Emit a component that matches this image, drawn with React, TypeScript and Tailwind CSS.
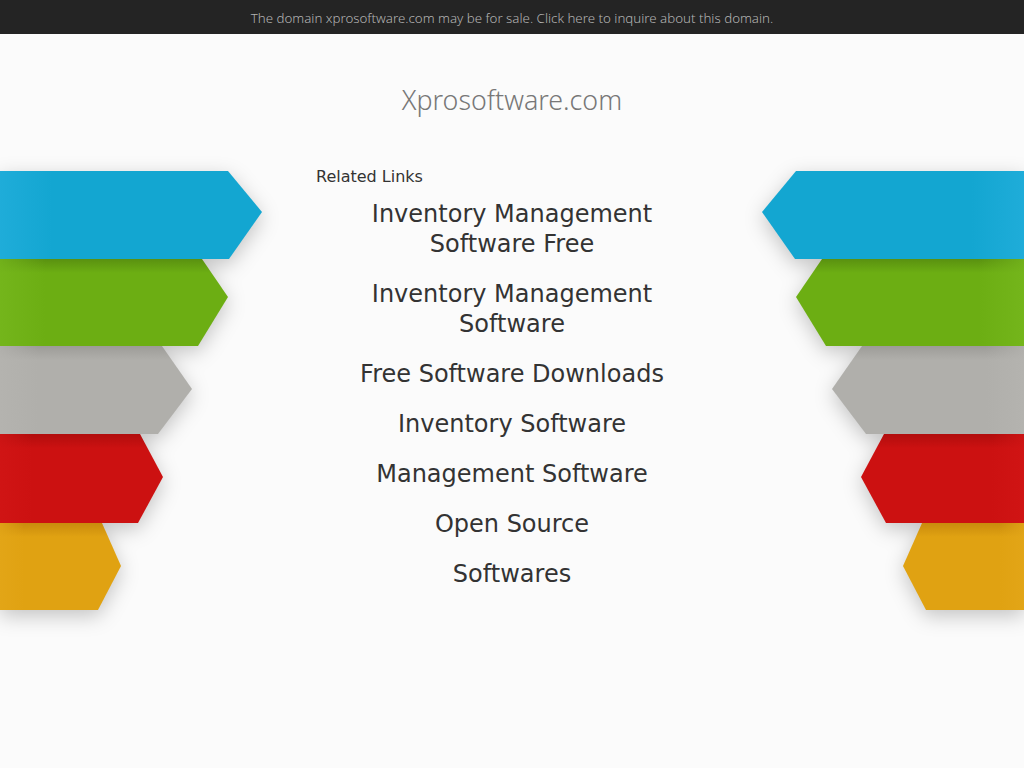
import React from "react";

type Band = {
  id: string;
  h: number;
  top: number;
  tip: number;
  mid: number;
  bottom: number;
  base: string;
  shade: string;
  light: string;
};

const bands: Band[] = [
  { id: "blue", h: 88, top: 228, tip: 262, mid: 41, bottom: 229, base: "#13a6d1", shade: "#13a6d1", light: "#22aedb" },
  { id: "green", h: 87, top: 202, tip: 228, mid: 38, bottom: 198, base: "#6cae13", shade: "#5a9110", light: "#76b71d" },
  { id: "gray", h: 88, top: 162, tip: 192, mid: 43, bottom: 158, base: "#b0afab", shade: "#9d9c98", light: "#b5b4b0" },
  { id: "red", h: 89, top: 140, tip: 163, mid: 43, bottom: 138, base: "#cc1111", shade: "#b10d0d", light: "#d11515" },
  { id: "yellow", h: 87, top: 102, tip: 121, mid: 43, bottom: 98, base: "#e0a212", shade: "#c98b0d", light: "#e3a618" },
];

const links = [
  "Inventory Management Software Free",
  "Inventory Management Software",
  "Free Software Downloads",
  "Inventory Software",
  "Management Software",
  "Open Source",
  "Softwares",
];

function Arrows({ side }: { side: "l" | "r" }) {
  return (
    <div
      className={`flex w-[263px] shrink-0 flex-col pt-[6px] drop-shadow-[0_6px_10px_rgba(0,0,0,0.22)] ${
        side === "r" ? "-scale-x-100" : ""
      }`}
    >
      {bands.map((b) => {
        const v = `${side}-${b.id}-v`;
        const hz = `${side}-${b.id}-h`;
        const pts = `0,0 ${b.top},0 ${b.tip},${b.mid} ${b.bottom},${b.h} 0,${b.h}`;
        return (
          <svg key={b.id} width="263" height={b.h} viewBox={`0 0 263 ${b.h}`} className="block overflow-visible">
            <defs>
              <linearGradient id={v} x1="0" y1="0" x2="0" y2="1">
                <stop offset="0" stopColor={b.shade} />
                <stop offset="0.16" stopColor={b.base} />
                <stop offset="1" stopColor={b.base} />
              </linearGradient>
              <linearGradient id={hz} x1="0" y1="0" x2="1" y2="0">
                <stop offset="0" stopColor={b.light} stopOpacity="0.8" />
                <stop offset="0.2" stopColor={b.light} stopOpacity="0" />
              </linearGradient>
            </defs>
            <polygon points={pts} fill={`url(#${v})`} />
            <polygon points={pts} fill={`url(#${hz})`} />
          </svg>
        );
      })}
    </div>
  );
}

export default function App() {
  return (
    <div className="min-h-[768px] overflow-hidden bg-[#fbfbfb]">
      <div className="flex h-[34px] items-center justify-center bg-[#242424] pt-[3px] font-['Noto_Sans',sans-serif] text-[13.3px] font-light text-[#b3b3b3]">
        The domain xprosoftware.com may be for sale. Click here to inquire about this domain.
      </div>

      <h1 className="mt-[49px] text-center font-['Noto_Sans',sans-serif] text-[26.8px] leading-[34px] font-light text-[#777777]">
        Xprosoftware.com
      </h1>

      <div className="mt-[48px] flex">
        <Arrows side="l" />
        <div className="flex flex-1 justify-center">
          <div className="w-[392px] font-['DejaVu_Sans',sans-serif] text-[#333333]">
            <div className="text-[16px] leading-[24px]">Related Links</div>
            <ul className="mt-[10px] flex flex-col gap-[20px] text-center text-[24px] leading-[30px]">
              {links.map((l) => (
                <li key={l}>
                  <a href="#">{l}</a>
                </li>
              ))}
            </ul>
          </div>
        </div>
        <Arrows side="r" />
      </div>
    </div>
  );
}
